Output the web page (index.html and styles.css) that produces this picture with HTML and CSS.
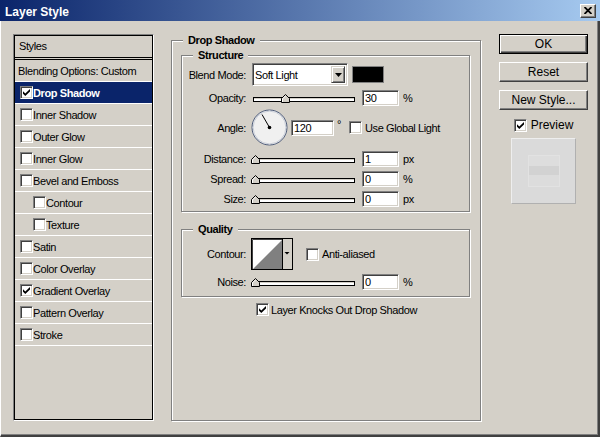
FILE: index.html
```html
<!DOCTYPE html>
<html lang="en">

<head>
    <meta charset="UTF-8">
    <title>Layer Style</title>
    <link rel="stylesheet" href="styles.css">
</head>

<body>

    <div class="window">
        <!-- title bar -->
        <div class="titlebar">
            <span class="title">Layer Style</span>
            <button class="close" aria-label="Close">
                <svg width="8" height="7" viewBox="0 0 8 7">
                    <path d="M0.5 0 L7.5 7 M7.5 0 L0.5 7" stroke="#000" stroke-width="1.8" />
                </svg>
            </button>
        </div>

        <div class="frame">
            <!-- left: styles list -->
            <div class="styles-list">
                <div class="list-head">Styles</div>
                <div class="list-item plain">Blending Options: Custom</div>
                <div class="list-item selected">
                    <span class="checkbox"><svg width="7" height="7" viewBox="0 0 7 7"><polygon points="0,2.3 2.3,4.6 7,0 7,2.4 2.3,7 0,4.7" /></svg></span>Drop Shadow
                </div>
                <div class="list-item"><span class="checkbox"></span>Inner Shadow</div>
                <div class="list-item"><span class="checkbox"></span>Outer Glow</div>
                <div class="list-item"><span class="checkbox"></span>Inner Glow</div>
                <div class="list-item"><span class="checkbox"></span>Bevel and Emboss</div>
                <div class="list-item sub"><span class="checkbox"></span>Contour</div>
                <div class="list-item sub"><span class="checkbox"></span>Texture</div>
                <div class="list-item"><span class="checkbox"></span>Satin</div>
                <div class="list-item"><span class="checkbox"></span>Color Overlay</div>
                <div class="list-item">
                    <span class="checkbox"><svg width="7" height="7" viewBox="0 0 7 7"><polygon points="0,2.3 2.3,4.6 7,0 7,2.4 2.3,7 0,4.7" /></svg></span>Gradient Overlay
                </div>
                <div class="list-item"><span class="checkbox"></span>Pattern Overlay</div>
                <div class="list-item"><span class="checkbox"></span>Stroke</div>
            </div>

            <!-- middle: drop shadow settings -->
            <fieldset class="group main-group">
                <legend>Drop Shadow</legend>

                <fieldset class="group sub-group structure">
                    <legend>Structure</legend>

                    <div class="row row-blend">
                        <span class="label">Blend Mode:</span>
                        <div class="select">
                            <span class="select-value">Soft Light</span>
                            <span class="select-btn"><svg width="7" height="4" viewBox="0 0 7 4"><polygon points="0,0 7,0 3.5,4" /></svg></span>
                        </div>
                        <span class="swatch"></span>
                    </div>

                    <div class="row row-opacity">
                        <span class="label">Opacity:</span>
                        <div class="slider">
                            <div class="track"></div>
                            <svg class="thumb" style="left: 29%" width="9" height="9" viewBox="0 0 9 9"><polygon points="0.5,8.5 0.5,4.5 4.5,0.5 8.5,4.5 8.5,8.5" /><polyline points="1.5,8 1.5,4.9 4.5,1.9" /></svg>
                        </div>
                        <input class="field" type="text" value="30">
                        <span class="unit">%</span>
                    </div>

                    <div class="row row-angle">
                        <span class="label">Angle:</span>
                        <svg class="dial" width="37" height="37" viewBox="0 0 37 37">
                            <circle cx="18.5" cy="18.5" r="17.5" fill="#f0f0f0" stroke="#4d5b79" />
                            <circle cx="18.5" cy="18.5" r="16.4" fill="none" stroke="#c9ced8" />
                            <line x1="18.5" y1="18.5" x2="11" y2="5.5" stroke="#000" />
                            <circle cx="18.5" cy="18.5" r="1.8" fill="#000" />
                        </svg>
                        <input class="field wide" type="text" value="120">
                        <span class="degree">°</span>
                        <span class="checkbox global"></span>
                        <span>Use Global Light</span>
                    </div>

                    <div class="row row-distance">
                        <span class="label">Distance:</span>
                        <div class="slider">
                            <div class="track"></div>
                            <svg class="thumb" style="left: 0%" width="9" height="9" viewBox="0 0 9 9"><polygon points="0.5,8.5 0.5,4.5 4.5,0.5 8.5,4.5 8.5,8.5" /><polyline points="1.5,8 1.5,4.9 4.5,1.9" /></svg>
                        </div>
                        <input class="field" type="text" value="1">
                        <span class="unit">px</span>
                    </div>

                    <div class="row">
                        <span class="label">Spread:</span>
                        <div class="slider">
                            <div class="track"></div>
                            <svg class="thumb" style="left: 0%" width="9" height="9" viewBox="0 0 9 9"><polygon points="0.5,8.5 0.5,4.5 4.5,0.5 8.5,4.5 8.5,8.5" /><polyline points="1.5,8 1.5,4.9 4.5,1.9" /></svg>
                        </div>
                        <input class="field" type="text" value="0">
                        <span class="unit">%</span>
                    </div>

                    <div class="row">
                        <span class="label">Size:</span>
                        <div class="slider">
                            <div class="track"></div>
                            <svg class="thumb" style="left: 0%" width="9" height="9" viewBox="0 0 9 9"><polygon points="0.5,8.5 0.5,4.5 4.5,0.5 8.5,4.5 8.5,8.5" /><polyline points="1.5,8 1.5,4.9 4.5,1.9" /></svg>
                        </div>
                        <input class="field" type="text" value="0">
                        <span class="unit">px</span>
                    </div>
                </fieldset>

                <fieldset class="group sub-group quality">
                    <legend>Quality</legend>

                    <div class="row row-contour">
                        <span class="label">Contour:</span>
                        <svg class="contour" width="42" height="32" viewBox="0 0 42 32">
                            <rect x="0.5" y="0.5" width="41" height="31" fill="#d4d0c8" stroke="#000" />
                            <rect x="1" y="1" width="30" height="30" fill="#fff" />
                            <polygon points="2,31 31,2 31,31" fill="#808080" />
                            <path d="M1.5 31 V1.5 H31" fill="none" stroke="#404040" />
                            <line x1="31.5" y1="1" x2="31.5" y2="31" stroke="#000" />
                            <polygon points="33.5,14 38.5,14 36,16.5" fill="#000" />
                        </svg>
                        <span class="checkbox aliased"></span>
                        <span>Anti-aliased</span>
                    </div>

                    <div class="row">
                        <span class="label">Noise:</span>
                        <div class="slider">
                            <div class="track"></div>
                            <svg class="thumb" style="left: 0%" width="9" height="9" viewBox="0 0 9 9"><polygon points="0.5,8.5 0.5,4.5 4.5,0.5 8.5,4.5 8.5,8.5" /><polyline points="1.5,8 1.5,4.9 4.5,1.9" /></svg>
                        </div>
                        <input class="field" type="text" value="0">
                        <span class="unit">%</span>
                    </div>
                </fieldset>

                <div class="knock">
                    <span class="checkbox"><svg width="7" height="7" viewBox="0 0 7 7"><polygon points="0,2.3 2.3,4.6 7,0 7,2.4 2.3,7 0,4.7" /></svg></span>
                    <span>Layer Knocks Out Drop Shadow</span>
                </div>
            </fieldset>

            <!-- right: buttons and preview -->
            <div class="actions">
                <button class="btn default">OK</button>
                <button class="btn">Reset</button>
                <button class="btn">New Style...</button>
                <div class="preview-toggle">
                    <span class="checkbox"><svg width="7" height="7" viewBox="0 0 7 7"><polygon points="0,2.3 2.3,4.6 7,0 7,2.4 2.3,7 0,4.7" /></svg></span>
                    <span>Preview</span>
                </div>
                <div class="preview">
                    <div class="preview-swatch"></div>
                </div>
            </div>
        </div>
    </div>

</body>

</html>
```

FILE: styles.css
```css
body {
    margin: 0;
    background-color: #d4d0c8;
    font-family: "Liberation Sans", Arial, sans-serif;
    font-size: 11px;
    letter-spacing: -0.4px;
    color: #000;
}

.window {
    width: 600px;
    height: 437px;
    display: flex;
    flex-direction: column;
}

/* title bar */
.titlebar {
    height: 21px;
    flex: none;
    box-sizing: border-box;
    display: flex;
    align-items: center;
    justify-content: space-between;
    padding: 0 4px 0 5px;
    background: linear-gradient(to right, #0a246a, #a6caf0);
    color: #fff;
}

.title {
    font-size: 12px;
    font-weight: bold;
    letter-spacing: 0;
    padding-top: 2px;
}

.close {
    width: 16px;
    height: 14px;
    padding: 0;
    display: flex;
    align-items: center;
    justify-content: center;
    background-color: #d4d0c8;
    border: 1px solid;
    border-color: #fff #404040 #404040 #fff;
    box-shadow: inset -1px -1px #808080;
}

.frame {
    flex: 1;
    display: flex;
    align-items: flex-start;
    padding: 13px 0 0 12px;
    border-left: 1px solid #fff;
    border-right: 2px solid #404040;
    border-bottom: 2px solid #404040;
    box-shadow: inset -1px -1px #808080;
}

/* checkbox */
.checkbox {
    width: 13px;
    height: 13px;
    flex: none;
    box-sizing: border-box;
    display: inline-flex;
    align-items: center;
    justify-content: center;
    background-color: #fff;
    border: 1px solid;
    border-color: #808080 #fff #fff #808080;
    box-shadow: inset 1px 1px #404040, inset -1px -1px #d4d0c8;
}

.checkbox svg {
    fill: #000;
}

/* styles list */
.styles-list {
    width: 141px;
    height: 387px;
    flex: none;
    box-sizing: border-box;
    padding: 1px;
    border: 1px solid;
    border-color: #808080 #fff #fff #808080;
    box-shadow: inset 0 0 0 1px #000;
}

.list-head {
    height: 21px;
    line-height: 21px;
    padding-left: 4px;
    border-bottom: 3px double #000;
}

.list-item {
    height: 21px;
    display: flex;
    align-items: center;
    padding-left: 5px;
    border-bottom: 1px solid #fff;
    white-space: nowrap;
}

.list-item.plain {
    padding-left: 3px;
}

.list-item.sub {
    padding-left: 18px;
}

.list-item.selected {
    background-color: #0a246a;
    color: #fff;
    font-weight: bold;
}

/* group boxes */
.group {
    margin: 0;
    padding: 0;
    min-width: 0;
    box-sizing: border-box;
    border: 1px solid #808080;
    box-shadow: inset 1px 1px #fff, 1px 1px #fff;
}

.group > legend {
    padding: 0 5px;
    line-height: 12px;
    font-weight: bold;
    background-color: #d4d0c8;
}

.main-group {
    width: 310px;
    height: 387px;
    flex: none;
    margin-left: 17px;
    padding: 3px 9px 0 9px;
}

.main-group > legend {
    margin-left: 2px;
}

.sub-group {
    width: 289px;
}

.sub-group > legend {
    margin-left: 11px;
}

.structure {
    padding: 2px 0 4px 0;
}

.quality {
    margin-top: 11px;
    padding: 3px 0 6px 0;
}

/* rows */
.row {
    display: flex;
    align-items: center;
    height: 16px;
    margin-top: 4px;
    white-space: nowrap;
}

.row-blend {
    height: 23px;
    margin-top: 0;
}

.row-angle {
    height: 37px;
    margin-top: 3px;
}

.row-distance {
    margin-top: 5px;
}

.row-contour {
    height: 32px;
    margin-top: 0;
}

.label {
    width: 64px;
    flex: none;
    margin-right: 5px;
    text-align: right;
}

/* dropdown */
.select {
    width: 96px;
    height: 23px;
    margin-left: 1px;
    box-sizing: border-box;
    display: flex;
    align-items: center;
    justify-content: space-between;
    background-color: #fff;
    border: 1px solid;
    border-color: #808080 #fff #fff #808080;
    box-shadow: inset 1px 1px #404040, inset -1px -1px #d4d0c8;
    padding: 2px 2px 2px 2px;
}

.select-value {
    padding-left: 0;
}

.select-btn {
    width: 14px;
    height: 17px;
    box-sizing: border-box;
    display: flex;
    align-items: center;
    justify-content: center;
    background-color: #d4d0c8;
    border: 1px solid;
    border-color: #d4d0c8 #404040 #404040 #d4d0c8;
    box-shadow: inset 1px 1px #fff, inset -1px -1px #808080;
}

.select-btn svg {
    fill: #000;
}

.swatch {
    width: 32px;
    height: 17px;
    margin-left: 4px;
    box-sizing: border-box;
    background-color: #000;
    border: 1px solid #808080;
}

/* slider */
.slider {
    position: relative;
    width: 104px;
    height: 10px;
    flex: none;
    margin-right: 7px;
}

.track {
    width: 102px;
    height: 5px;
    margin: 4px 0 0 2px;
    box-sizing: border-box;
    background-color: #fff;
    border: 1px solid #000;
    box-shadow: inset 0 1px #d4d0c8;
}

.thumb {
    position: absolute;
    top: 1px;
}

.thumb polygon {
    fill: #d4d0c8;
    stroke: #000;
}

.thumb polyline {
    fill: none;
    stroke: #fff;
}

/* text fields */
.field {
    width: 37px;
    height: 16px;
    flex: none;
    box-sizing: border-box;
    padding: 0 0 0 2px;
    margin: 0;
    font: inherit;
    letter-spacing: inherit;
    background-color: #fff;
    border: 1px solid;
    border-color: #808080 #fff #fff #808080;
    box-shadow: inset 1px 1px #404040, inset -1px -1px #d4d0c8;
    outline: none;
}

.field.wide {
    width: 43px;
}

.unit {
    margin-left: 4px;
}

.dial {
    flex: none;
    margin-right: 3px;
}

.degree {
    margin-left: 3px;
    align-self: flex-start;
    margin-top: 9px;
}

.checkbox.global {
    margin: 0 3px 0 8px;
}

.contour {
    flex: none;
    margin-right: 13px;
}

.checkbox.aliased {
    margin-right: 3px;
}

.knock {
    display: flex;
    align-items: center;
    height: 13px;
    margin: 6px 0 0 75px;
}

.knock .checkbox {
    margin-right: 2px;
}

/* buttons column */
.actions {
    width: 89px;
    flex: none;
    margin-left: 18px;
    display: flex;
    flex-direction: column;
    align-items: center;
}

.btn {
    width: 89px;
    height: 20px;
    padding: 0;
    box-sizing: border-box;
    font-family: "Liberation Sans", Arial, sans-serif;
    font-size: 12px;
    color: #000;
    background-color: #d4d0c8;
    border: 1px solid;
    border-color: #fff #404040 #404040 #fff;
    box-shadow: inset -1px -1px #808080;
}

.btn + .btn {
    margin-top: 8px;
}

.btn.default {
    border-color: #000;
    box-shadow: inset 1px 1px #fff, inset -1px -1px #404040, inset -2px -2px #808080;
}

.preview-toggle {
    height: 14px;
    margin-top: 8px;
    display: flex;
    align-items: center;
    font-size: 12px;
    letter-spacing: 0;
}

.preview-toggle .checkbox {
    margin-right: 4px;
}

.preview {
    width: 65px;
    height: 66px;
    margin-top: 6px;
    box-sizing: border-box;
    display: flex;
    align-items: center;
    justify-content: center;
    background-color: #dadada;
    border: 1px solid;
    border-color: #eeeeee #b0b0b0 #b0b0b0 #eeeeee;
}

.preview-swatch {
    width: 32px;
    height: 32px;
    box-sizing: border-box;
    border: 1px solid #e2e2e2;
    background: linear-gradient(#dddddd 0, #dddddd 35%, #d2d2d2 35%, #d2d2d2 65%, #dcdcdc 65%);
}
```
